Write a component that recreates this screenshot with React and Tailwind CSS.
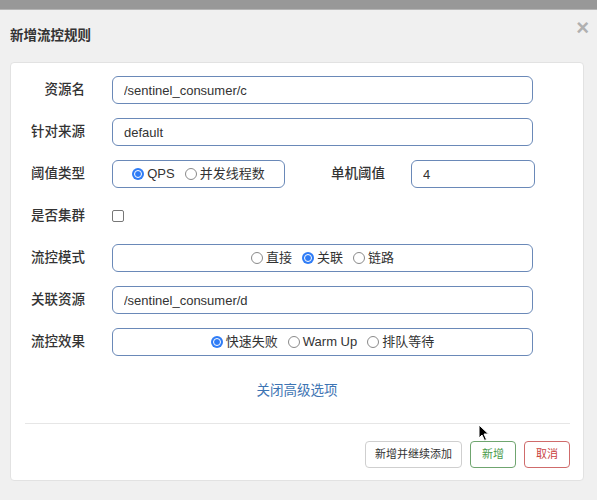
import { useState } from 'react'

const font = { fontFamily: '"Liberation Sans", "Noto Sans CJK SC", sans-serif' }

function Radio({ checked, label, onClick }) {
  return (
    <label onClick={onClick} className="flex cursor-pointer items-center gap-[3px] whitespace-nowrap text-[13px] text-[#333]">
      {checked ? (
        <span className="flex h-[12px] w-[12px] items-center justify-center rounded-full bg-[#2f7cf6]">
          <span className="h-[8px] w-[8px] rounded-full border-[1.5px] border-white bg-[#2f7cf6]" />
        </span>
      ) : (
        <span className="h-[12px] w-[12px] rounded-full border border-[#8a8a8a] bg-white" />
      )}
      <span>{label}</span>
    </label>
  )
}

function RadioGroup({ options, value, onChange, className = '' }) {
  return (
    <div className={`flex h-[28px] items-center justify-center gap-[10px] rounded-[6px] border border-[#6a89b8] bg-white ${className}`}>
      {options.map((opt) => (
        <Radio key={opt} label={opt} checked={value === opt} onClick={() => onChange(opt)} />
      ))}
    </div>
  )
}

function TextInput({ value, className = '' }) {
  return (
    <input
      readOnly
      value={value}
      className={`h-[28px] rounded-[6px] border border-[#6a89b8] bg-white px-[11px] text-[13px] text-[#333] outline-none ${className}`}
      style={font}
    />
  )
}

function Row({ label, children }) {
  return (
    <div className="flex h-[28px] items-center">
      <div className="w-[74px] shrink-0 text-right text-[13.5px] font-medium text-[#333]">{label}</div>
      <div className="ml-[27px] flex flex-1 items-center">{children}</div>
    </div>
  )
}

export default function App() {
  const [grade, setGrade] = useState('QPS')
  const [strategy, setStrategy] = useState('关联')
  const [behavior, setBehavior] = useState('快速失败')

  return (
    <div className="relative h-[500px] w-[597px] overflow-hidden bg-[#f0f0f0]" style={font}>
      <div className="h-[10px] border-b border-[#b5b5b5] bg-[#989898]" />

      <div className="flex h-[52px] items-center justify-between pl-[10px] pr-[8px]">
        <h4 className="text-[13.5px] font-bold text-[#333]">新增流控规则</h4>
        <button className="-mt-[17px] text-[22px] font-bold leading-none text-[#b0b0b0]">×</button>
      </div>

      <div className="ml-[10px] w-[574px] rounded-[4px] border border-[#e2e2e2] bg-white pb-[12px] pt-[13px]">
        <div className="flex flex-col gap-[14px] pr-[50px]">
          <Row label="资源名">
            <TextInput value="/sentinel_consumer/c" className="flex-1" />
          </Row>
          <Row label="针对来源">
            <TextInput value="default" className="flex-1" />
          </Row>
          <Row label="阈值类型">
            <RadioGroup className="w-[173px] shrink-0" options={['QPS', '并发线程数']} value={grade} onChange={setGrade} />
            <div className="ml-[46px] shrink-0 whitespace-nowrap text-[13.5px] font-medium text-[#333]">单机阈值</div>
            <TextInput value="4" className="ml-[26px] w-[124px] min-w-0 flex-1" />
          </Row>
          <Row label="是否集群">
            <span className="h-[12px] w-[12px] rounded-[2px] border border-[#777] bg-white" />
          </Row>
          <Row label="流控模式">
            <RadioGroup className="flex-1" options={['直接', '关联', '链路']} value={strategy} onChange={setStrategy} />
          </Row>
          <Row label="关联资源">
            <TextInput value="/sentinel_consumer/d" className="flex-1" />
          </Row>
          <Row label="流控效果">
            <RadioGroup className="flex-1" options={['快速失败', 'Warm Up', '排队等待']} value={behavior} onChange={setBehavior} />
          </Row>
        </div>

        <div className="mt-[25px] text-center text-[13.5px] leading-[20px] text-[#3d74b3]">
          <a href="#" className="hover:underline">关闭高级选项</a>
        </div>

        <div className="ml-[14px] mr-[13px] mt-[22px] border-t border-[#e6e6e6]" />

        <div className="mr-[13px] mt-[17px] flex justify-end gap-[8px]">
          <button className="h-[27px] w-[97px] rounded-[4px] border border-[#cfcfcf] bg-white text-[11px] text-[#333]">新增并继续添加</button>
          <button className="h-[27px] w-[46px] rounded-[4px] border border-[#6fa56f] bg-white text-[11px] text-[#4a9a4a]">新增</button>
          <button className="h-[27px] w-[46px] rounded-[4px] border border-[#cf6b6b] bg-white text-[11px] text-[#c9423f]">取消</button>
        </div>
      </div>

      <svg className="pointer-events-none absolute left-[478px] top-[424px]" width="12" height="18" viewBox="0 0 12 18">
        <path d="M1 1 L1 14 L4 11 L6.5 16.5 L8.5 15.5 L6 10 L10.5 10 Z" fill="#000" stroke="#fff" strokeWidth="1" />
      </svg>
    </div>
  )
}
